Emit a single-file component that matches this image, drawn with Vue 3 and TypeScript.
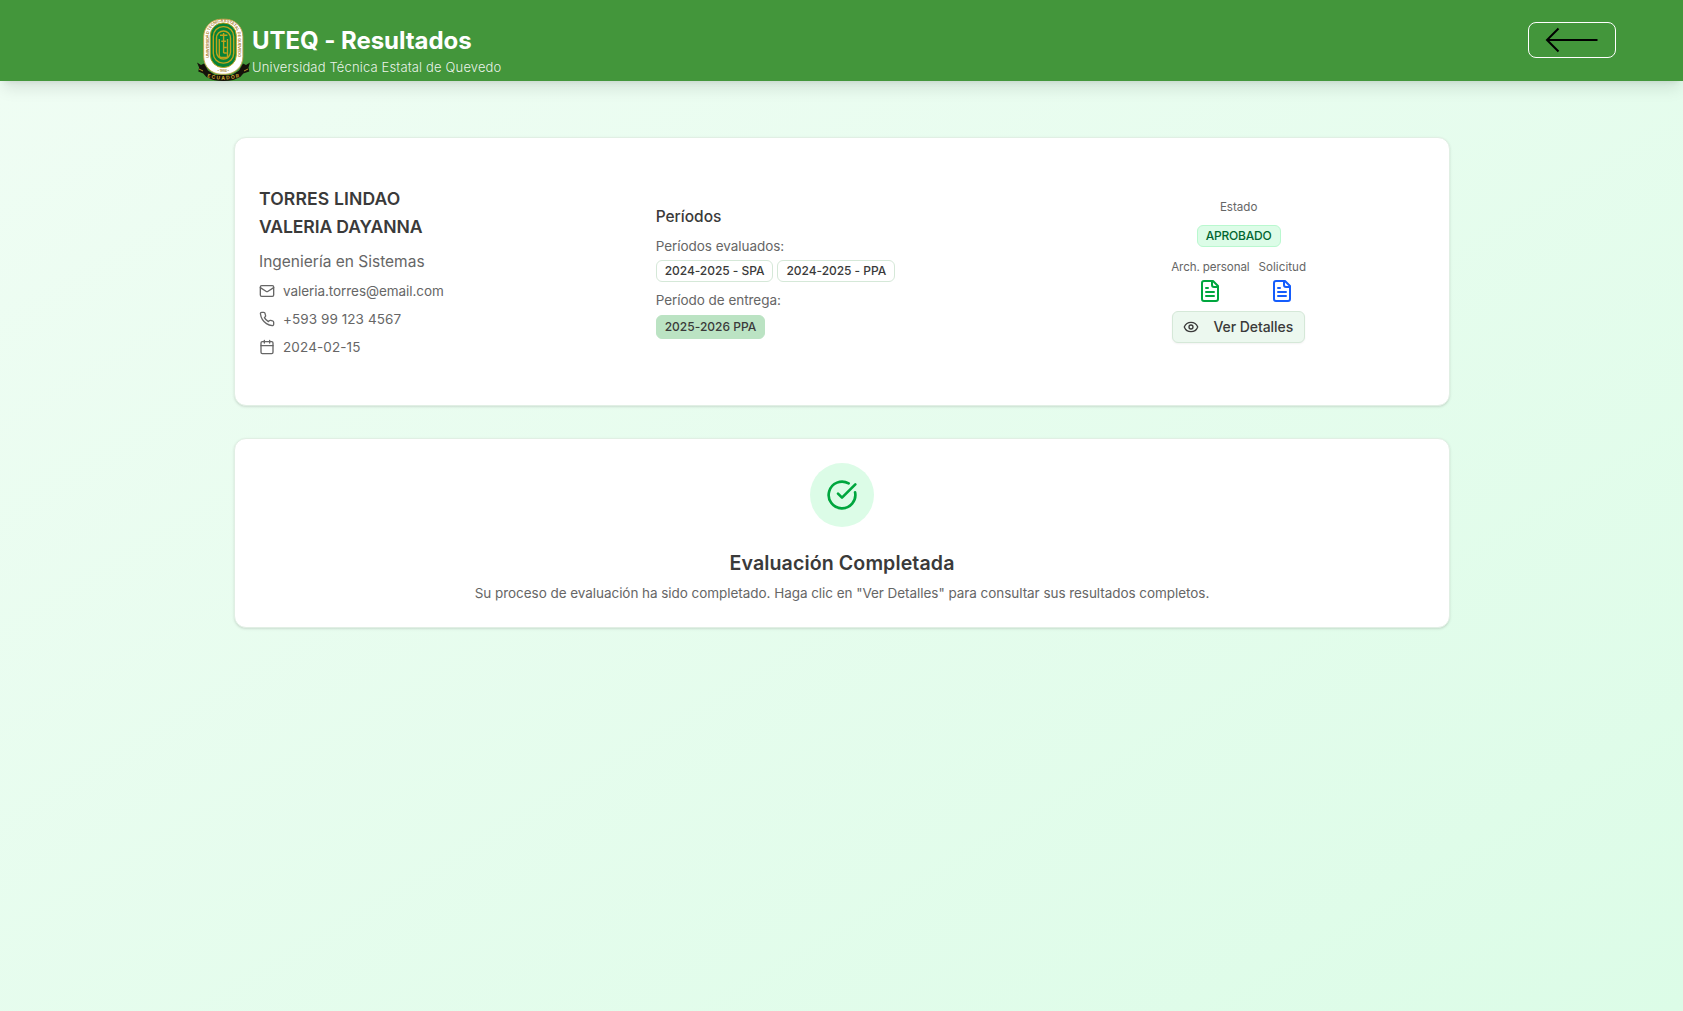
<script setup lang="ts">
interface Contact { icon: 'mail' | 'phone' | 'calendar'; text: string; cls: string }

const contacts: Contact[] = [
  { icon: 'mail', text: 'valeria.torres@email.com', cls: 'c-mail' },
  { icon: 'phone', text: '+593 99 123 4567', cls: 'c-phone' },
  { icon: 'calendar', text: '2024-02-15', cls: 'c-date' },
]
const periods: string[] = ['2024-2025 - SPA', '2024-2025 - PPA']
const documents = [
  { label: 'Arch. personal', cls: 'doc-green' },
  { label: 'Solicitud', cls: 'doc-blue' },
]
</script>

<template>
  <div class="page">
    <header class="topbar">
      <div class="brand">
        <svg class="crest" viewBox="0 0 53 63">
          <path d="M0 44.500l4 2.500 3-1.500 4 7 7 4.500h17l7-4.500 4-7 3 1.500 4-2.500-1.500 5 .8 4-6 2-3 3.500-7 3q-10 2-20 0l-7-3-3-3.500-5-2 .8-4z" fill="#15120a" />
          <path d="M2 51l4 2M51 51l-4 2" stroke="#b8922a" stroke-width="1" />
          <rect x="6.700" y="1.200" width="39.200" height="55" rx="17.500" fill="#fff" stroke="#c9a24a" stroke-width=".9" />
          <rect x="13.300" y="5" width="26" height="44.500" rx="12.500" fill="#078238" stroke="#b8a01a" stroke-width="1" />
          <path id="crest-ring" d="M11.600 40V18.500a14.700 14.700 0 0 1 29.400 0V40" fill="none" />
          <text class="ring"><textPath href="#crest-ring" textLength="88">UNIVERSIDAD TECNICA ESTATAL DE QUEVEDO</textPath></text>
          <g fill="none" stroke="#c0a41c" stroke-width="1.400">
            <rect x="16.300" y="8.600" width="20.400" height="36.500" rx="9.800" />
            <path d="M19.500 20v14a7 7 0 0 0 14 0V20a7 7 0 0 0-14 0z" />
            <path d="M22.300 21v16.500q0 2 2 2h6.200V21M23 17.300h7.400M26.600 15v20M24.300 23.200h4.600M26.600 29.500h3M26.600 35h3" />
          </g>
          <text class="year" x="26.300" y="54" text-anchor="middle">• 1984 •</text>
          <path id="crest-ribbon" d="M10 59.200q16.500 5 33-.2" fill="none" />
          <text class="ribbon"><textPath href="#crest-ribbon" textLength="33">ECUADOR</textPath></text>
        </svg>
        <div class="brand-text">
          <h1>UTEQ - Resultados</h1>
          <p>Universidad Técnica Estatal de Quevedo</p>
        </div>
      </div>
      <button class="back" type="button" aria-label="Volver">
        <svg viewBox="0 0 54 26" width="54" height="26"><path d="M52.500 13H2M13.500 1.500 2 13l11.500 11.500" fill="none" stroke="#000" stroke-width="2" /></svg>
      </button>
    </header>

    <main class="content">
      <section class="card profile">
        <div class="person">
          <h2><span class="surname">TORRES LINDAO</span><br><span class="forename">VALERIA DAYANNA</span></h2>
          <p class="career">Ingeniería en Sistemas</p>
          <ul class="contacts">
            <li v-for="c in contacts" :key="c.icon">
              <svg class="icon" viewBox="0 0 24 24">
                <template v-if="c.icon === 'mail'"><rect width="20" height="16" x="2" y="4" rx="2" /><path d="m22 7-8.970 5.700a1.940 1.940 0 0 1-2.060 0L2 7" /></template>
                <path v-else-if="c.icon === 'phone'" d="M22 16.920v3a2 2 0 0 1-2.180 2 19.790 19.790 0 0 1-8.630-3.070 19.500 19.500 0 0 1-6-6 19.790 19.790 0 0 1-3.070-8.670A2 2 0 0 1 4.110 2h3a2 2 0 0 1 2 1.720 12.840 12.840 0 0 0 .7 2.810 2 2 0 0 1-.45 2.110L8.090 9.910a16 16 0 0 0 6 6l1.270-1.270a2 2 0 0 1 2.110-.45 12.840 12.840 0 0 0 2.810.7A2 2 0 0 1 22 16.920z" />
                <template v-else><path d="M8 2v4M16 2v4M3 10h18" /><rect width="18" height="18" x="3" y="4" rx="2" /></template>
              </svg>
              <span :class="c.cls">{{ c.text }}</span>
            </li>
          </ul>
        </div>

        <div class="periods">
          <h3>Períodos</h3>
          <p class="label">Períodos evaluados:</p>
          <div class="badges"><span v-for="p in periods" :key="p" class="badge">{{ p }}</span></div>
          <p class="label">Período de entrega:</p>
          <span class="badge delivery">2025-2026 PPA</span>
        </div>

        <div class="status">
          <p class="small">Estado</p>
          <span class="badge approved">APROBADO</span>
          <div class="documents">
            <div v-for="d in documents" :key="d.label" class="document" :class="d.cls">
              <span class="small">{{ d.label }}</span>
              <svg viewBox="0 0 24 24"><path d="M15 2H6a2 2 0 0 0-2 2v16a2 2 0 0 0 2 2h12a2 2 0 0 0 2-2V7Z" /><path d="M14 2v4a2 2 0 0 0 2 2h4M10 9H8M16 13H8M16 17H8" /></svg>
            </div>
          </div>
          <button class="details" type="button">
            <svg class="icon" viewBox="0 0 24 24"><path d="M2.062 12.348a1 1 0 0 1 0-.696 10.750 10.750 0 0 1 19.876 0 1 1 0 0 1 0 .696 10.750 10.750 0 0 1-19.876 0" /><circle cx="12" cy="12" r="3" /></svg>
            <span>Ver Detalles</span>
          </button>
        </div>
      </section>

      <section class="card outcome">
        <div class="check"><svg viewBox="0 0 24 24"><path d="M21.801 10A10 10 0 1 1 17 3.335" /><path d="m9 11 3 3L22 4" /></svg></div>
        <h2>Evaluación Completada</h2>
        <p>Su proceso de evaluación ha sido completado. Haga clic en "Ver Detalles" para consultar sus resultados completos.</p>
      </section>
    </main>
  </div>
</template>

<style>
body { margin: 0; }
</style>

<style scoped>
* { box-sizing: border-box; }
h1, h2, h3, p, ul { margin: 0; padding: 0; font-weight: inherit; }
button { font: inherit; padding: 0; }
.page { min-height: 1011px; display: flow-root; background: linear-gradient(to bottom right, #f0fdf4, #dcfce7); font-family: Inter, "Liberation Sans", sans-serif; color: #3a3a3a; }
.topbar { height: 81px; padding: 0 67px 0 197px; display: flex; align-items: flex-start; justify-content: space-between; background: #43963b; box-shadow: 0 10px 15px -3px rgba(0,0,0,.1), 0 4px 6px -4px rgba(0,0,0,.1); color: #fff; }
.brand { display: flex; padding-top: 18px; }
.crest { width: 53px; height: 63px; flex: none; }
.ring { font: 700 4px Inter, sans-serif; fill: #b08a3a; }
.year { font: 700 3px Inter, sans-serif; fill: #a98a2a; }
.ribbon { font: 700 5px Inter, sans-serif; fill: #c9a030; }
.brand-text { padding: 7px 0 0 2px; }
h1 { font-size: 24px; font-weight: 700; line-height: 32px; letter-spacing: -.06px; }
.brand-text p { font-size: 13px; font-weight: 300; line-height: 20px; letter-spacing: .15px; color: rgba(255,255,255,.9); }
.back { width: 88px; height: 36px; margin-top: 22px; display: flex; align-items: center; justify-content: center; border: 1px solid #fff; border-radius: 8px; background: transparent; }
.content { width: 1216px; margin: 56px 0 0 234px; }
.card { border: 1px solid #e1efe4; border-radius: 12px; background: #fff; box-shadow: 0 1px 3px rgba(0,0,0,.1), 0 1px 2px -1px rgba(0,0,0,.1); }
.profile { height: 269px; padding: 0 24px; display: grid; grid-template-columns: repeat(3, 1fr); gap: 24px; align-items: center; }
.person { padding-bottom: 2px; }
.person h2 { font-size: 17.6px; line-height: 28px; font-weight: 600; }
.surname { letter-spacing: .12px; }
.forename { letter-spacing: -.14px; }
.career { margin-top: 9px; font-size: 15.5px; line-height: 24px; color: #666; }
.contacts { margin-top: 7px; list-style: none; display: grid; gap: 8px; font-size: 13.5px; line-height: 20px; color: #666; }
.contacts li { display: flex; align-items: center; gap: 8px; }
.c-mail { letter-spacing: -.06px; }
.c-phone { letter-spacing: .07px; }
.c-date { letter-spacing: .12px; }
.icon { width: 16px; height: 16px; flex: none; fill: none; stroke: currentColor; stroke-width: 2; stroke-linecap: round; stroke-linejoin: round; }
.periods { padding-bottom: 1px; }
.periods h3 { padding-top: 1px; margin-bottom: -1px; font-size: 15.5px; line-height: 24px; font-weight: 500; }
.label { margin-top: 8px; font-size: 13.5px; line-height: 20px; letter-spacing: -.04px; color: #666; }
.badges { display: flex; gap: 4px; margin-top: 4px; }
.badge { display: inline-flex; align-items: center; height: 22px; padding: 0 8px; border: 1px solid #d5e8d8; border-radius: 6px; font-size: 12px; font-weight: 500; line-height: 16px; letter-spacing: -.04px; white-space: nowrap; }
.delivery { height: 24px; margin-top: 5px; background: #bbe3c3; border-color: #bbe3c3; letter-spacing: .02px; }
.status { display: flex; flex-direction: column; align-items: center; padding-bottom: 2px; }
.small { font-size: 11.6px; line-height: 16px; color: #666; }
.approved { margin-top: 10px; background: #dcfce7; border-color: #b9f8cf; color: #016630; letter-spacing: -.2px; }
.documents { display: flex; gap: 9px; margin-top: 12px; }
.document { display: flex; flex-direction: column; align-items: center; }
.doc-green .small { letter-spacing: -.1px; }
.doc-blue .small { letter-spacing: .04px; }
.document svg { width: 24px; height: 24px; margin-top: 4px; fill: none; stroke: currentColor; stroke-width: 2; stroke-linecap: round; stroke-linejoin: round; }
.doc-green { color: #00a63e; }
.doc-blue { color: #155dfc; }
.details { width: 133px; height: 32px; margin-top: 8px; padding: 0 11px 0 10px; display: flex; align-items: center; justify-content: space-between; border: 1px solid #d5e8d8; border-radius: 6px; background: #ecf8ef; color: #3a3a3a; font-size: 14px; font-weight: 500; letter-spacing: -.06px; box-shadow: 0 1px 2px rgba(0,0,0,.05); }
.outcome { margin-top: 32px; height: 190px; padding-top: 24px; text-align: center; }
.check { width: 64px; height: 64px; margin: 0 auto; display: grid; place-items: center; border-radius: 50%; background: #dcfce7; }
.check svg { width: 32px; height: 32px; fill: none; stroke: #00a63e; stroke-width: 2; stroke-linecap: round; stroke-linejoin: round; }
.outcome h2 { margin-top: 22px; font-size: 19.6px; line-height: 28px; font-weight: 600; letter-spacing: .1px; }
.outcome p { margin-top: 6px; font-size: 13.5px; line-height: 20px; letter-spacing: -.05px; color: #666; }
</style>
